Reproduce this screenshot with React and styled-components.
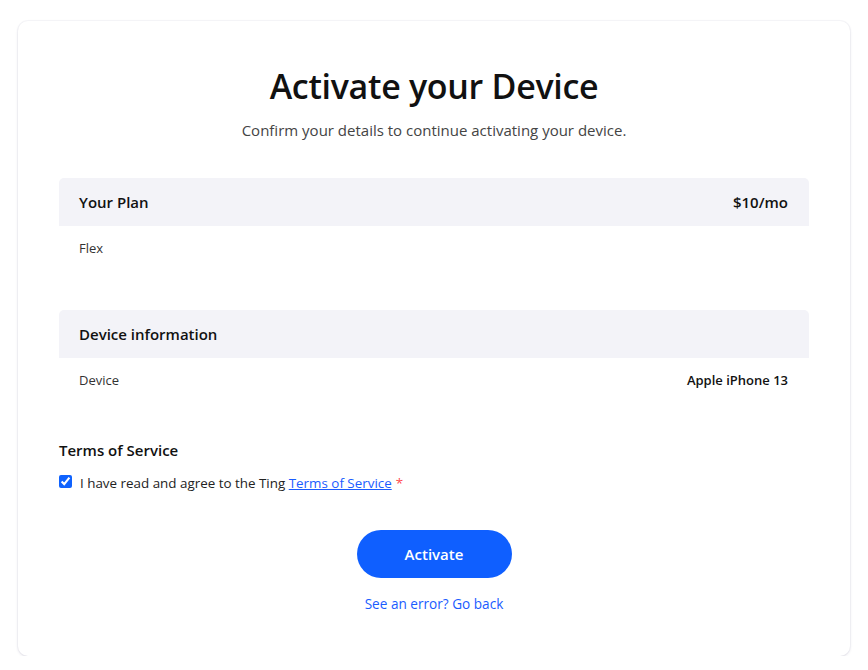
import React from "react";
import styled, { createGlobalStyle } from "styled-components";

const Global = createGlobalStyle`
  html, body { margin: 0; padding: 0; background: #ffffff; }
  body { font-family: "Open Sans", "Noto Sans", sans-serif; color: #111; }
  * { box-sizing: border-box; }
`;

const Page = styled.div`
  padding: 21px 18px 0 18px;
`;

const Card = styled.div`
  width: 832px;
  background: #fff;
  border-radius: 10px;
  box-shadow: 0 1px 3px rgba(40, 30, 80, 0.12), 0 0 0 1px rgba(40, 30, 80, 0.03);
  padding: 42px 41px 43px 41px;
  display: flex;
  flex-direction: column;
`;

const Title = styled.h1`
  margin: 0;
  text-align: center;
  font-size: 34px;
  font-weight: 600;
  line-height: 46px;
  letter-spacing: -0.3px;
  color: #111;
`;

const Subtitle = styled.p`
  margin: 10px 0 0 0;
  text-align: center;
  font-size: 15px;
  line-height: 22px;
  color: #444;
`;

const Section = styled.section`
  margin-top: ${(p) => p.$mt}px;
  display: flex;
  flex-direction: column;
`;

const SectionHeader = styled.div`
  height: 48px;
  background: #f3f3f8;
  border-radius: 5px 5px 0 0;
  padding: 0 21px 0 20px;
  display: flex;
  align-items: center;
  justify-content: space-between;
  font-size: 15px;
  font-weight: 600;
  color: #111;
`;

const Row = styled.div`
  padding: 0 21px 0 20px;
  height: ${(p) => p.$h}px;
  display: flex;
  align-items: center;
  justify-content: space-between;
  font-size: 13px;
  color: #333;
`;

const Value = styled.span`
  font-weight: 600;
  color: #111;
`;

const TermsTitle = styled.h3`
  margin: 37px 0 0 0;
  font-size: 15px;
  font-weight: 600;
  line-height: 22px;
  color: #111;
`;

const CheckRow = styled.label`
  margin-top: 13px;
  display: flex;
  align-items: center;
  gap: 8px;
  font-size: 13.4px;
  color: #222;
`;

const Check = styled.input`
  margin: 0;
  width: 13px;
  height: 13px;
  accent-color: #0f62fe;
  position: relative;
  top: -2px;
`;

const TosLink = styled.a`
  color: #1a5cff;
  text-decoration: underline;
`;

const Required = styled.span`
  color: #ff4d4f;
  margin-left: 4px;
`;

const Actions = styled.div`
  margin-top: 38px;
  display: flex;
  flex-direction: column;
  align-items: center;
`;

const Button = styled.button`
  width: 155px;
  height: 48px;
  border: none;
  border-radius: 24px;
  background: #0f5fff;
  color: #fff;
  font-family: inherit;
  font-size: 15px;
  font-weight: 600;
  cursor: pointer;
`;

const BackLink = styled.a`
  margin-top: 17px;
  color: #1a5cff;
  font-size: 13.6px;
  font-weight: 500;
  text-decoration: none;
  line-height: 18px;
`;

export default function App() {
  return (
    <>
      <Global />
      <Page>
        <Card>
          <Title>Activate your Device</Title>
          <Subtitle>Confirm your details to continue activating your device.</Subtitle>

          <Section $mt={37}>
            <SectionHeader>
              <span>Your Plan</span>
              <span>$10/mo</span>
            </SectionHeader>
            <Row $h={44}>
              <span>Flex</span>
            </Row>
          </Section>

          <Section $mt={40}>
            <SectionHeader>
              <span>Device information</span>
            </SectionHeader>
            <Row $h={44}>
              <span>Device</span>
              <Value>Apple iPhone 13</Value>
            </Row>
          </Section>

          <TermsTitle>Terms of Service</TermsTitle>
          <CheckRow>
            <Check type="checkbox" defaultChecked />
            <span>
              I have read and agree to the Ting <TosLink href="#">Terms of Service</TosLink>
              <Required>*</Required>
            </span>
          </CheckRow>

          <Actions>
            <Button>Activate</Button>
            <BackLink href="#">See an error? Go back</BackLink>
          </Actions>
        </Card>
      </Page>
    </>
  );
}
